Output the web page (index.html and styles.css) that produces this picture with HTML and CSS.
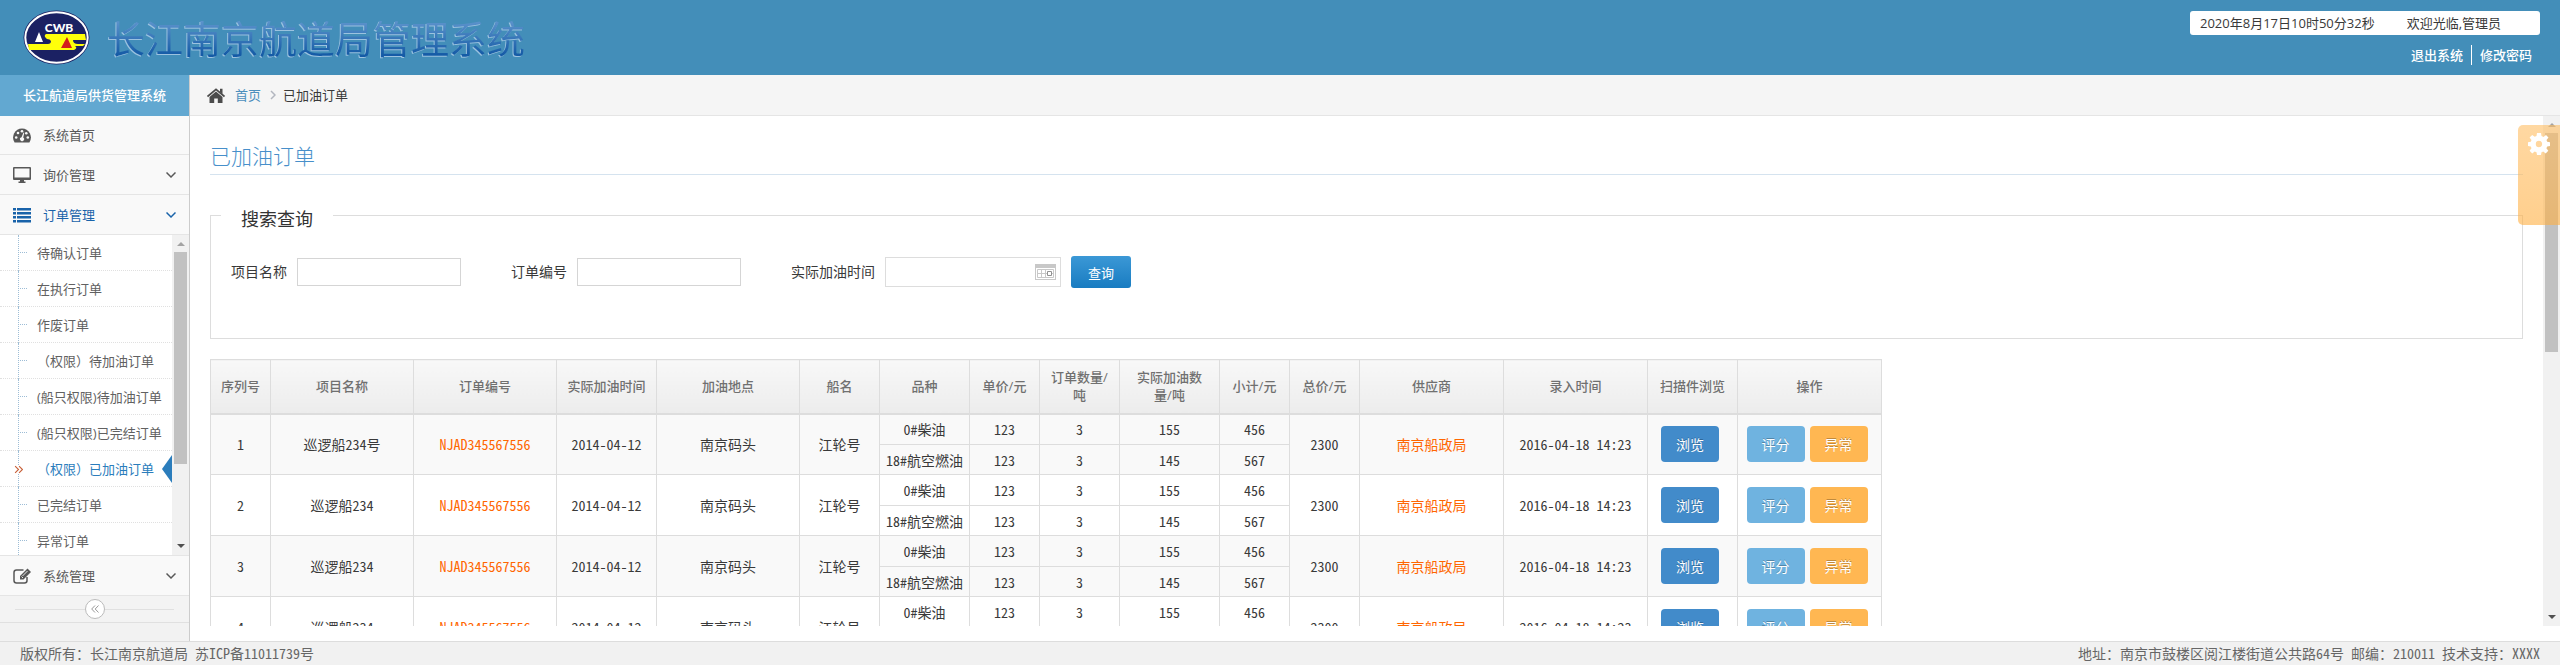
FILE: index.html
```html
<!DOCTYPE html>
<html lang="zh-CN">
<head>
<meta charset="utf-8">
<title>长江南京航道局管理系统</title>
<link rel="stylesheet" href="styles.css">
</head>
<body>
<header class="topbar">
  <svg class="logo" viewBox="0 0 67 55" role="img" aria-label="CWB">
    <ellipse cx="33.500" cy="27.500" rx="33" ry="27" fill="#1b2163"/>
    <ellipse cx="33.500" cy="27.500" rx="31.200" ry="25.200" fill="none" stroke="#fff" stroke-width="2"/>
    <path d="M23 24H62L63 30L50 30Q50 34 55 34H62L60 36H52Q55 38 51 40H6L5 34H25Q28 34 28 31Q27 29 24 29Q20 26 23 24Z" fill="#ffff0a"/>
    <path d="M16 22L20 32H12Z" fill="#fff"/>
    <path d="M44 27L49 38H38Z" fill="#d31f1c"/>
    <text class="logo-text" x="36" y="22" text-anchor="middle">CWB</text>
  </svg>
  <h1 class="brand">长江南京航道局管理系统</h1>
  <div class="account">
    <div class="account-info"><span>2020年8月17日10时50分32秒</span><span>欢迎光临,管理员</span></div>
    <nav class="account-links"><a href="#">退出系统</a><a href="#">修改密码</a></nav>
  </div>
</header>

<div class="workspace">
  <aside class="sidebar">
    <h2 class="side-title">长江航道局供货管理系统</h2>
    <a class="side-item" href="#">
      <svg class="side-icon" viewBox="0 0 18 18"><path d="M9 2.500A9 9 0 0 0 1.600 16.400H16.400A9 9 0 0 0 9 2.500Z" fill="#585858"/><g fill="#f9f9f9"><circle cx="3.200" cy="11.500" r="1.300"/><circle cx="5" cy="7" r="1.300"/><circle cx="9" cy="5.200" r="1.300"/><circle cx="14.800" cy="11.500" r="1.300"/><circle cx="13.300" cy="7.200" r="1.300"/><path d="M10.500 6.500L11.300 6.800L10.200 11.500A2 2 0 1 1 8.500 11.200Z"/></g></svg>
      <span>系统首页</span>
    </a>
    <a class="side-item" href="#">
      <svg class="side-icon" viewBox="0 0 18 18"><path d="M1 1H17Q18 1 18 2V13Q18 14 17 14H11V15.500H12.500V17H5.500V15.500H7V14H1Q0 14 0 13V2Q0 1 1 1ZM1.500 2.500V11.500H16.500V2.500Z" fill="#585858" fill-rule="evenodd"/></svg>
      <span>询价管理</span>
      <svg class="side-caret" viewBox="0 0 10 10"><path d="M0.500 2.500L5 7L9.500 2.500"/></svg>
    </a>
    <a class="side-item side-item-open" href="#">
      <svg class="side-icon" viewBox="0 0 18 18"><path d="M0 2H3V4.500H0ZM4 2H18V4.500H4ZM0 6H3V8.500H0ZM4 6H18V8.500H4ZM0 10H3V12.500H0ZM4 10H18V12.500H4ZM0 14H3V16.500H0ZM4 14H18V16.500H4Z" fill="#1963aa"/></svg>
      <span>订单管理</span>
      <svg class="side-caret" viewBox="0 0 10 10"><path d="M0.500 2.500L5 7L9.500 2.500"/></svg>
    </a>
    <div class="submenu">
      <ul class="submenu-list">
        <li><a href="#">待确认订单</a></li>
        <li><a href="#">在执行订单</a></li>
        <li><a href="#">作废订单</a></li>
        <li><a href="#">（权限）待加油订单</a></li>
        <li><a href="#">(船只权限)待加油订单</a></li>
        <li><a href="#">(船只权限)已完结订单</a></li>
        <li class="current"><svg class="current-mark" viewBox="0 0 8 8"><path d="M1 1L4 4L1 7M4.500 1L7.500 4L4.500 7"/></svg><a href="#">（权限）已加油订单</a><svg class="current-arrow" viewBox="0 0 10 28"><path d="M10 0V28L0 14Z"/></svg></li>
        <li><a href="#">已完结订单</a></li>
        <li><a href="#">异常订单</a></li>
      </ul>
      <div class="scrollbar"><span class="sb-up"></span><span class="sb-thumb sb-thumb-menu"></span><span class="sb-down"></span></div>
    </div>
    <a class="side-item" href="#">
      <svg class="side-icon" viewBox="0 0 18 18"><path d="M14 10V13.500Q14 16 11.500 16H3.500Q1 16 1 13.500V5.500Q1 3 3.500 3H10.500" fill="none" stroke="#585858" stroke-width="1.500"/><path d="M7 12.500V9L14.500 1.500L18 5L10.500 12.500Z" fill="#585858"/><path d="M8.500 9.500L10 11M9.500 9L14.500 4" stroke="#f9f9f9" stroke-width="0.900"/></svg>
      <span>系统管理</span>
      <svg class="side-caret" viewBox="0 0 10 10"><path d="M0.500 2.500L5 7L9.500 2.500"/></svg>
    </a>
    <div class="collapse">
      <button class="collapse-btn" type="button" aria-label="收起菜单"><svg viewBox="0 0 8 8"><path d="M4 0.500L0.700 4L4 7.500M7.500 0.500L4.200 4L7.500 7.500"/></svg></button>
    </div>
  </aside>

  <main class="main">
    <nav class="crumbs">
      <svg class="crumb-home" viewBox="0 0 18 15"><path d="M9 3.500L15.500 9V15H10.800V10.500H7.200V15H2.500V9Z" fill="#4c4c4c"/><path d="M0.500 8.500L9 1.300L17.500 8.500" fill="none" stroke="#4c4c4c" stroke-width="1.700"/><path d="M13 0.800H15.500V6L13 4Z" fill="#4c4c4c"/></svg>
      <a href="#">首页</a>
      <svg class="crumb-sep" viewBox="0 0 6 10"><path d="M1 1L5 5L1 9"/></svg>
      <span>已加油订单</span>
    </nav>
    <div class="scroller">
      <div class="content">
        <h2 class="page-title">已加油订单</h2>
        <form>
          <fieldset class="search">
            <legend>搜索查询</legend>
            <div class="search-row">
              <div class="field"><label for="project">项目名称</label><input id="project" type="text"></div>
              <div class="field"><label for="order">订单编号</label><input id="order" type="text"></div>
              <div class="field field-date">
                <label for="date">实际加油时间</label>
                <div class="date-box"><input id="date" type="text"><svg viewBox="0 0 21 16"><path d="M0 0H21V16H0ZM1 4V15H20V4Z" fill="#c8c8c8" fill-rule="evenodd"/><path d="M2.500 5.500H18.500V13.500H2.500ZM2.500 9.500H18.500M6.500 5.500V13.500M10.500 5.500V13.500" fill="none" stroke="#c8c8c8"/><path d="M12.500 7.500H16.500V11.500H12.500Z" fill="#fff" stroke="#909090"/></svg></div>
                <button class="search-btn" type="submit">查询</button>
              </div>
            </div>
          </fieldset>
        </form>
        <table class="orders">
          <colgroup><col class="w60"><col class="w143"><col class="w143"><col class="w100"><col class="w143"><col class="w80"><col class="w90"><col class="w70"><col class="w80"><col class="w100"><col class="w70"><col class="w70"><col class="w144"><col class="w144"><col class="w90"><col class="w144"></colgroup>
          <thead>
            <tr><th>序列号</th><th>项目名称</th><th>订单编号</th><th>实际加油时间</th><th>加油地点</th><th>船名</th><th>品种</th><th>单价/元</th><th>订单数量/吨</th><th>实际加油数量/吨</th><th>小计/元</th><th>总价/元</th><th>供应商</th><th>录入时间</th><th>扫描件浏览</th><th>操作</th></tr>
          </thead>
          <tbody class="odd">
            <tr><td rowspan="2">1</td><td rowspan="2">巡逻船234号</td><td rowspan="2"><a href="#">NJAD345567556</a></td><td rowspan="2">2014-04-12</td><td rowspan="2">南京码头</td><td rowspan="2">江轮号</td><td>0#柴油</td><td>123</td><td>3</td><td>155</td><td>456</td><td rowspan="2">2300</td><td rowspan="2"><a href="#">南京船政局</a></td><td rowspan="2">2016-04-18 14:23</td><td rowspan="2"><div class="btns"><button class="btn view" type="button">浏览</button></div></td><td rowspan="2"><div class="btns"><button class="btn rate" type="button">评分</button><button class="btn flag" type="button">异常</button></div></td></tr>
            <tr><td>18#航空燃油</td><td>123</td><td>3</td><td>145</td><td>567</td></tr>
          </tbody>
          <tbody>
            <tr><td rowspan="2">2</td><td rowspan="2">巡逻船234</td><td rowspan="2"><a href="#">NJAD345567556</a></td><td rowspan="2">2014-04-12</td><td rowspan="2">南京码头</td><td rowspan="2">江轮号</td><td>0#柴油</td><td>123</td><td>3</td><td>155</td><td>456</td><td rowspan="2">2300</td><td rowspan="2"><a href="#">南京船政局</a></td><td rowspan="2">2016-04-18 14:23</td><td rowspan="2"><div class="btns"><button class="btn view" type="button">浏览</button></div></td><td rowspan="2"><div class="btns"><button class="btn rate" type="button">评分</button><button class="btn flag" type="button">异常</button></div></td></tr>
            <tr><td>18#航空燃油</td><td>123</td><td>3</td><td>145</td><td>567</td></tr>
          </tbody>
          <tbody class="odd">
            <tr><td rowspan="2">3</td><td rowspan="2">巡逻船234</td><td rowspan="2"><a href="#">NJAD345567556</a></td><td rowspan="2">2014-04-12</td><td rowspan="2">南京码头</td><td rowspan="2">江轮号</td><td>0#柴油</td><td>123</td><td>3</td><td>155</td><td>456</td><td rowspan="2">2300</td><td rowspan="2"><a href="#">南京船政局</a></td><td rowspan="2">2016-04-18 14:23</td><td rowspan="2"><div class="btns"><button class="btn view" type="button">浏览</button></div></td><td rowspan="2"><div class="btns"><button class="btn rate" type="button">评分</button><button class="btn flag" type="button">异常</button></div></td></tr>
            <tr><td>18#航空燃油</td><td>123</td><td>3</td><td>145</td><td>567</td></tr>
          </tbody>
          <tbody>
            <tr><td rowspan="2">4</td><td rowspan="2">巡逻船234</td><td rowspan="2"><a href="#">NJAD345567556</a></td><td rowspan="2">2014-04-12</td><td rowspan="2">南京码头</td><td rowspan="2">江轮号</td><td>0#柴油</td><td>123</td><td>3</td><td>155</td><td>456</td><td rowspan="2">2300</td><td rowspan="2"><a href="#">南京船政局</a></td><td rowspan="2">2016-04-18 14:23</td><td rowspan="2"><div class="btns"><button class="btn view" type="button">浏览</button></div></td><td rowspan="2"><div class="btns"><button class="btn rate" type="button">评分</button><button class="btn flag" type="button">异常</button></div></td></tr>
            <tr><td>18#航空燃油</td><td>123</td><td>3</td><td>145</td><td>567</td></tr>
          </tbody>
        </table>
      </div>
      <div class="scrollbar"><span class="sb-up"></span><span class="sb-thumb sb-thumb-main"></span><span class="sb-down"></span></div>
      <button class="settings" type="button" aria-label="设置"><svg viewBox="0 0 22 22"><path d="M9 0H13L13.500 3L15.500 4L18 2L20.500 4.500L18.500 7L19.200 8.800L22 9.200V13L19.200 13.500L18.400 15.300L20.300 17.800L17.700 20.400L15.200 18.500L13.500 19.200L13 22H9L8.500 19.200L6.700 18.500L4.200 20.400L1.600 17.800L3.500 15.300L2.800 13.500L0 13V9.200L2.800 8.700L3.500 7L1.600 4.400L4.200 1.900L6.700 3.700L8.500 3ZM11 7.800A3.200 3.200 0 1 0 11 14.200A3.200 3.200 0 1 0 11 7.800Z" fill="#fff" fill-rule="evenodd"/></svg></button>
    </div>
  </main>
</div>

<footer class="footer"><span>版权所有：长江南京航道局 苏ICP备11011739号</span><span>地址：南京市鼓楼区阅江楼街道公共路64号 邮编：210011 技术支持：XXXX</span></footer>
</body>
</html>
```
FILE: styles.css
```css
* { box-sizing: border-box; }
body {
  margin: 0;
  height: 100vh;
  display: flex;
  flex-direction: column;
  font: 13px/20px "Open Sans", "Noto Sans CJK SC", sans-serif;
  color: #393939;
  background: #fff;
  overflow: hidden;
}
a { color: inherit; text-decoration: none; }
h1, h2 { margin: 0; font-weight: 400; }
svg { display: block; flex: none; }
button { border: 0; padding: 0; font-family: inherit; cursor: pointer; }

.topbar {
  display: flex;
  align-items: center;
  flex: none;
  height: 75px;
  padding: 0 20px 0 23px;
  background: #438eb9;
}
.logo { width: 67px; height: 55px; }
.logo-text { font: 900 12px Lato, sans-serif; fill: #fff; }
.brand {
  margin-left: 17px;
  font-size: 38px;
  line-height: 56px;
  background: linear-gradient(#5c93cc 20%, #155ba6 80%);
  -webkit-background-clip: text;
  background-clip: text;
  color: transparent;
  filter: drop-shadow(-1px 1px 0 rgba(178, 208, 232, 0.8));
}
.account { margin-left: auto; width: 350px; }
.account-info {
  display: flex;
  gap: 32px;
  height: 24px;
  padding: 2px 10px;
  border-radius: 3px;
  background: #fff;
}
.account-links {
  display: flex;
  justify-content: flex-end;
  margin-top: 10px;
  font-weight: 500;
  color: #fff;
}
.account-links a { padding: 0 8px; }
.account-links a + a { border-left: 1px solid #fff; }

.workspace { flex: 1; display: flex; min-height: 0; }
.sidebar {
  flex: none;
  width: 190px;
  display: flex;
  flex-direction: column;
  border-right: 1px solid #ccc;
  background: #f2f2f2;
}
.side-title {
  height: 41px;
  flex: none;
  font-size: 13px;
  line-height: 41px;
  font-weight: 500;
  text-align: center;
  color: #fff;
  background: #62a8d1;
}
.side-item {
  display: flex;
  align-items: center;
  gap: 12px;
  flex: none;
  height: 40px;
  padding: 0 13px;
  border-bottom: 1px solid #e5e5e5;
  background: #f9f9f9;
  color: #585858;
}
.side-title + .side-item { height: 39px; }
.side-icon { width: 18px; height: 18px; }
.side-caret { width: 10px; height: 10px; margin-left: auto; fill: none; stroke: #585858; stroke-width: 1.5; }
.side-item-open { color: #1963aa; }
.side-item-open .side-caret { stroke: #1963aa; }
.submenu {
  display: flex;
  height: 321px;
  overflow: hidden;
  border-bottom: 1px solid #e5e5e5;
  background: #fff;
}
.submenu-list { flex: 1; margin: 0; padding: 0; list-style: none; }
.submenu-list li {
  position: relative;
  display: flex;
  align-items: center;
  height: 36px;
  padding-left: 37px;
  border-bottom: 1px dotted #e0e0e0;
  color: #616161;
  white-space: nowrap;
}
.submenu-list li::before {
  content: "";
  position: absolute;
  left: 18px;
  top: 0;
  bottom: -1px;
  border-left: 1px dotted #9dbdd6;
}
.submenu-list li::after {
  content: "";
  position: absolute;
  left: 20px;
  top: 17px;
  width: 7px;
  border-top: 1px dotted #9dbdd6;
}
.submenu-list .current { color: #2b7dbc; }
.submenu-list .current::after { display: none; }
.current-mark {
  position: absolute;
  left: 14px;
  top: 14px;
  width: 9px;
  height: 9px;
  background: #fff;
  fill: none;
  stroke: #c86139;
}
.current-arrow { position: absolute; right: 0; top: 4px; width: 10px; height: 28px; fill: #2b7dbc; }
.collapse {
  display: flex;
  align-items: center;
  flex: none;
  height: 27px;
  padding: 0 15px;
  border-bottom: 1px solid #e0e0e0;
  background: #f3f3f3;
}
.collapse::before, .collapse::after { content: ""; flex: 1; border-top: 1px solid #e0e0e0; }
.collapse-btn {
  display: grid;
  place-items: center;
  width: 20px;
  height: 20px;
  border: 1px solid #bbb;
  border-radius: 50%;
  background: #fff;
}
.collapse-btn svg { width: 8px; height: 8px; fill: none; stroke: #999; }

.scrollbar {
  flex: none;
  display: flex;
  flex-direction: column;
  align-items: center;
  width: 17px;
  padding: 7px 0;
  background: #f1f1f1;
}
.sb-up { border: 4px solid transparent; border-top: 0; border-bottom-color: #a3a3a3; }
.sb-down { margin-top: auto; border: 4px solid transparent; border-bottom: 0; border-top-color: #505050; }
.sb-thumb { width: 13px; margin-top: 6px; background: #c1c1c1; }
.sb-thumb-menu { height: 212px; }
.sb-thumb-main { height: 219px; }

.main { flex: 1; min-width: 0; display: flex; flex-direction: column; padding-bottom: 15px; }
.crumbs {
  display: flex;
  align-items: center;
  flex: none;
  height: 41px;
  padding-left: 17px;
  border-bottom: 1px solid #e5e5e5;
  background: #f5f5f5;
}
.crumbs a { margin-left: 10px; color: #4c8fbd; }
.crumb-home { width: 18px; height: 15px; }
.crumb-sep { width: 6px; height: 10px; margin: 0 7px 0 9px; fill: none; stroke: #b2b6bf; stroke-width: 1.5; }
.scroller { flex: 1; position: relative; display: flex; min-height: 0; overflow: hidden; }
.content { flex: 1; min-width: 0; padding: 24px 20px 0 20px; }
.page-title {
  padding-bottom: 1px;
  border-bottom: 1px solid #d5e3ef;
  font-size: 21px;
  line-height: 33px;
  font-weight: 300;
  color: #478fca;
}
.search {
  margin: 22px 0 20px;
  min-width: 0;
  height: 142px;
  padding: 23px 20px 0;
  border: 1px solid #ddd;
}
.search legend { margin-left: -10px; padding: 8px 20px 0; font-size: 18px; line-height: 28px; color: #333; }
.search-row { display: flex; align-items: center; gap: 50px; }
.field { display: flex; align-items: center; gap: 10px; font-size: 14px; }
.field input { width: 164px; height: 28px; padding: 0 4px; border: 1px solid #d5d5d5; font: inherit; }
.date-box { display: flex; align-items: center; width: 176px; height: 30px; padding-right: 4px; border: 1px solid #ddd; }
.date-box input { flex: 1; min-width: 0; border: 0; }
.date-box svg { width: 21px; height: 16px; }
.search-btn {
  width: 60px;
  height: 32px;
  border-radius: 3px;
  background: linear-gradient(#3b98d6, #197cc1);
  color: #fff;
  font-size: 13px;
}

.orders {
  width: 1672px;
  table-layout: fixed;
  border-collapse: collapse;
  font-size: 14px;
  text-align: center;
}
.w60 { width: 60px; }
.w70 { width: 70px; }
.w80 { width: 80px; }
.w90 { width: 90px; }
.w100 { width: 100px; }
.w143 { width: 143px; }
.w144 { width: 144px; }
.orders th {
  height: 54px;
  padding: 0 9px;
  border: 1px solid #ddd;
  border-bottom-width: 2px;
  background: linear-gradient(#f8f8f8, #ececec);
  font-size: 13px;
  line-height: 18px;
  font-weight: 500;
  color: #707070;
}
.orders td {
  height: 30px;
  padding: 0;
  border: 1px solid #ddd;
  line-height: 18px;
  font-family: "Noto Sans CJK SC", sans-serif;
  font-feature-settings: "hwid";
}
.orders tr:first-child td { height: 31px; }
.odd { background: #f9f9f9; }
.orders td a { color: #f60; }
.btns { display: flex; justify-content: center; gap: 5px; padding-right: 5px; }
.btn {
  width: 58px;
  height: 36px;
  border-radius: 4px;
  color: #fff;
  font-size: 14px;
  text-shadow: 0 -1px 0 rgba(0, 0, 0, 0.25);
}
.view { background: #428bca; }
.rate { background: #6fb3e0; }
.flag { background: #ffb752; }

.settings {
  position: absolute;
  right: 0;
  top: 9px;
  display: flex;
  justify-content: center;
  align-items: flex-start;
  width: 42px;
  height: 100px;
  padding-top: 8px;
  border-radius: 5px 0 0 5px;
  background: linear-gradient(rgba(255, 190, 100, 0.6), rgba(255, 175, 65, 0.6));
}
.settings svg { width: 22px; height: 22px; }

.footer {
  display: flex;
  justify-content: space-between;
  flex: none;
  height: 24px;
  padding: 0 20px;
  border-top: 1px solid #ddd;
  background: #f1f1f1;
  font-family: "Noto Sans CJK SC", sans-serif;
  font-feature-settings: "hwid";
  font-size: 14px;
  line-height: 23px;
  color: #666;
}
```
